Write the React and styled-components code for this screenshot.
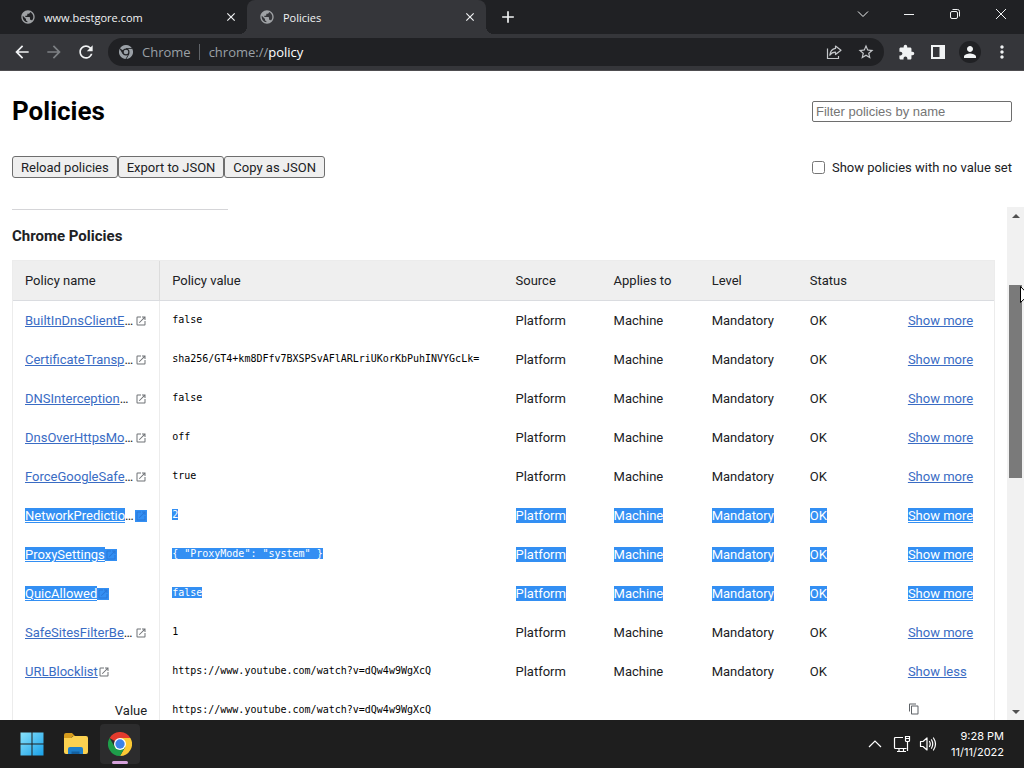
import React from 'react'
import styled, { createGlobalStyle, css } from 'styled-components';
import {
  MdArrowBack,
  MdArrowForward,
  MdRefresh,
  MdPublic,
  MdClose,
  MdAdd,
  MdStarBorder,
  MdExtension,
  MdPerson,
  MdMoreVert,
  MdOpenInNew,
  MdContentCopy,
} from 'react-icons/md';

const GlobalStyle = createGlobalStyle`
  * {
    box-sizing: border-box;
  }

  body {
    margin: 0;
    overflow: hidden;
    font-family: Roboto, "Liberation Sans", sans-serif;
    font-size: 13px;
    color: #202124;
    background: #fff;
  }

  button, input {
    font: inherit;
    color: inherit;
    margin: 0;
  }
`;

const Screen = styled.div`
  display: flex;
  flex-direction: column;
  height: 100vh;
`;

/* ---------- browser window ---------- */

const TabStrip = styled.header`
  display: flex;
  height: 34px;
  padding-left: 8px;
  background: #202124;
  color: #f1f3f4;
  font-family: "Open Sans", "Noto Sans", sans-serif;
  font-size: 11px;
`;

const Tab = styled.div`
  position: relative;
  display: flex;
  align-items: center;
  gap: 8px;
  width: 239px;
  padding: 0 8px 0 12px;
  color: #f1f3f4;

  ${({ $active }) => $active && css`
    background: #35363a;
    border-radius: 8px 8px 0 0;

    &::before,
    &::after {
      content: '';
      position: absolute;
      bottom: 0;
      width: 8px;
      height: 8px;
    }

    &::before {
      left: -8px;
      background: radial-gradient(circle at 0 0, transparent 8px, #35363a 8px);
    }

    &::after {
      right: -8px;
      background: radial-gradient(circle at 100% 0, transparent 8px, #35363a 8px);
    }
  `}

  > svg {
    color: #9fa2a5;
  }
`;

const TabTitle = styled.span`
  flex: 1;
  white-space: nowrap;
`;

const IconButton = styled.button`
  display: flex;
  align-items: center;
  justify-content: center;
  flex: none;
  width: ${({ $width }) => $width || 28}px;
  height: ${({ $height }) => $height || 28}px;
  padding: 0;
  border: 0;
  border-radius: 50%;
  background: none;
  color: ${({ $color }) => $color || '#f1f3f4'};
`;

const NewTab = styled.div`
  display: flex;
  align-items: center;
  flex: 1;
  padding-left: 8px;
`;

const Toolbar = styled.nav`
  display: flex;
  align-items: center;
  gap: 8px;
  height: 37px;
  padding: 0 8px;
  background: #35363a;
  border-bottom: 1px solid #4e4d50;
`;

const ButtonGroup = styled.div`
  display: flex;
  gap: 4px;
`;

const AddressBar = styled.div`
  display: flex;
  flex: 1;
  align-items: center;
  height: 28px;
  padding: 0 4px 0 11px;
  border-radius: 14px;
  background: #202124;
  color: #9aa0a6;
  font-family: "Open Sans", "Noto Sans", sans-serif;
  font-size: 13px;
`;

const SiteLabel = styled.span`
  margin-left: 9px;
  padding-right: 8px;
  border-right: 1px solid #5f6368;
  line-height: 16px;
`;

const Address = styled.span`
  flex: 1;
  padding-left: 9px;

  b {
    color: #fff;
    font-weight: 400;
  }
`;

/* ---------- policy page ---------- */

const Page = styled.main`
  display: flex;
  flex: 1;
  flex-direction: column;
  min-height: 0;
`;

const PageHead = styled.div`
  display: flex;
  align-items: center;
  justify-content: space-between;
  padding: 25px 12px 0;
`;

const PageTitle = styled.h1`
  margin: 0;
  color: #000;
  font-size: 26px;
  font-weight: 700;
  line-height: 30px;
`;

const FilterInput = styled.input`
  width: 200px;
  height: 21px;
  padding: 1px 3px;
  border: 1px solid #6e6e6e;
  border-radius: 2px;
  font-family: "Liberation Sans", Arial, sans-serif;

  &::placeholder {
    color: #757575;
  }
`;

const Actions = styled.div`
  display: flex;
  align-items: center;
  justify-content: space-between;
  padding: 30px 12px 29px;
`;

const ActionButtons = styled.div`
  display: flex;
`;

const ActionButton = styled.button`
  height: 22px;
  padding: 0 8px;
  border: 1px solid #6e6e6e;
  border-radius: 3px;
  background: #efefef;
`;

const CheckLabel = styled.label`
  display: flex;
  align-items: center;
  gap: 7px;

  input {
    width: 13px;
    height: 13px;
  }
`;

const ScrollArea = styled.div`
  display: flex;
  flex: 1;
  min-height: 0;
`;

const Content = styled.section`
  flex: 1;
  min-width: 0;
  padding: 2px 12px 0;
  overflow: hidden;
`;

const Rule = styled.hr`
  width: 216px;
  height: 1px;
  margin: 0;
  border: 0;
  background: #d5d5d8;
`;

const GroupTitle = styled.h2`
  margin: 16px 0 14px;
  font-size: 15px;
  font-weight: 700;
  line-height: 20px;
`;

const PolicyTable = styled.table`
  width: 100%;
  table-layout: fixed;
  border: 1px solid #ececec;
  border-spacing: 0;
`;

const HeadCell = styled.th`
  width: ${({ $width }) => $width};
  height: 40px;
  padding: 0 12px;
  border-bottom: 1px solid #dadce0;
  background: #efefef;
  font-weight: 400;
  text-align: left;

  &:first-child {
    border-right: 1px solid #dcdcdc;
  }
`;

const Cell = styled.td`
  height: 39px;
  padding: 0 12px;
  white-space: nowrap;

  &:first-child {
    border-right: 1px solid #ececec;
  }
`;

const DetailLabel = styled.th`
  height: 39px;
  padding: 0 12px;
  border-right: 1px solid #ececec;
  font-weight: 400;
  text-align: right;
`;

const highlight = css`
  background: #338ff3;
  color: #fff;
`;

const Mark = styled.span`
  ${({ $on }) => $on && highlight}
`;

const Link = styled.a`
  color: #3a6cc4;
  text-decoration: underline;
  ${({ $on }) => $on && highlight}
`;

const Name = styled.div`
  display: flex;
  align-items: center;
`;

const NameText = styled.span`
  flex: ${({ $cut }) => ($cut ? 1 : 'none')};
`;

const OpenIcon = styled.span`
  display: flex;
  flex: none;
  color: ${({ $on }) => ($on ? '#2a78d8' : '#6f7276')};
  background: ${({ $on }) => ($on ? '#338ff3' : 'none')};
`;

const Value = styled.code`
  display: block;
  padding-bottom: 2px;
  color: #000;
  font-family: "DejaVu Sans Mono", monospace;
  font-size: 10px;
  line-height: 13px;
`;

const CopyButton = styled.button`
  display: flex;
  padding: 0 0 3px;
  border: 0;
  background: none;
  color: #5f6368;
`;

const ScrollTrack = styled.div`
  position: relative;
  display: flex;
  flex-direction: column;
  align-items: center;
  width: 17px;
  background: #f1f1f1;
`;

const ScrollArrow = styled.button`
  display: flex;
  align-items: center;
  justify-content: center;
  width: 17px;
  height: 17px;
  padding: 0;
  border: 0;
  background: none;
`;

const ScrollGap = styled.div`
  flex: ${({ $part }) => $part};
`;

const ScrollThumb = styled.div`
  flex: 193;
  width: 13px;
  background: #7a7a7a;
`;

const Pointer = styled.svg`
  position: absolute;
  top: 79px;
  left: 13px;
`;

/* ---------- taskbar ---------- */

const Taskbar = styled.footer`
  display: flex;
  align-items: center;
  justify-content: space-between;
  height: 48px;
  padding: 0 20px 0 12px;
  background: #1e1e1e;
  color: #fff;
`;

const TaskButton = styled.button`
  position: relative;
  display: flex;
  align-items: center;
  justify-content: center;
  width: 40px;
  height: 40px;
  padding: 0;
  border: 0;
  border-radius: 4px;
  background: ${({ $open }) => ($open ? '#2c2c2d' : 'none')};

  ${({ $open }) => $open && css`
    &::after {
      content: '';
      position: absolute;
      bottom: 0;
      left: 12px;
      width: 16px;
      height: 3px;
      border-radius: 2px;
      background: #d6a3dc;
    }
  `}
`;

const Tray = styled.div`
  display: flex;
  align-items: center;
  gap: 8px;
`;

const Clock = styled.time`
  padding-left: 6px;
  font-family: Inter, sans-serif;
  font-size: 11px;
  line-height: 16px;
  text-align: right;

  span {
    display: block;
  }
`;

const columns = [
  ['Policy name', '15%'],
  ['Policy value', '35%'],
  ['Source', '10%'],
  ['Applies to', '10%'],
  ['Level', '10%'],
  ['Status', '10%'],
  ['', '10%'],
];

const policies = [
  { name: 'BuiltInDnsClientE', cut: true, value: 'false' },
  { name: 'CertificateTransp', cut: true, value: 'sha256/GT4+km8DFfv7BXSPSvAFlARLriUKorKbPuhINVYGcLk=' },
  { name: 'DNSInterception', cut: true, value: 'false' },
  { name: 'DnsOverHttpsMo', cut: true, value: 'off' },
  { name: 'ForceGoogleSafe', cut: true, value: 'true' },
  { name: 'NetworkPredictio', cut: true, value: '2', selected: true },
  { name: 'ProxySettings', value: '{ "ProxyMode": "system" }', selected: true },
  { name: 'QuicAllowed', value: 'false', selected: true },
  { name: 'SafeSitesFilterBe', cut: true, value: '1' },
  { name: 'URLBlocklist', value: 'https://www.youtube.com/watch?v=dQw4w9WgXcQ', expanded: true },
];

function ChromeMark({ size, mono }) {
  const colors = mono ? ['#9aa0a6', '#9aa0a6', '#9aa0a6'] : ['#e33b2e', '#fcc934', '#1e9e4a'];
  const line = mono ? '#202124' : 'none';
  return (
    <svg width={size} height={size} viewBox="0 0 24 24" aria-hidden="true">
      <path d="M12 12 L1.6 6 A12 12 0 0 1 22.4 6 Z" fill={colors[0]} />
      <path d="M12 12 V6 H22.4 A12 12 0 0 1 12 24 L17.2 15 Z" fill={colors[1]} />
      <path d="M12 12 L17.2 15 L12 24 A12 12 0 0 1 1.6 6 L6.8 15 Z" fill={colors[2]} />
      <path d="M12 6 H22.4 M17.2 15 L12 24 M6.8 15 L1.6 6" stroke={line} strokeWidth="1.4" />
      <circle cx="12" cy="12" r="6" fill={mono ? '#202124' : '#fff'} />
      <circle cx="12" cy="12" r={mono ? 4 : 4.7} fill={mono ? '#9aa0a6' : '#3b82e8'} />
    </svg>
  );
}

function ShareIcon() {
  return (
    <svg width="16" height="16" viewBox="0 0 16 16" fill="none" stroke="#c4c7ca" strokeWidth="1.2">
      <path d="M1.5 4.5 V14.5 H12.5 V12" />
      <path d="M9.5 2 L15 6.2 L9.5 10.5 V8.2 C7 8.2 5.2 9 3.8 11.2 C4.2 7.4 6.2 4.9 9.5 4.4 Z" strokeLinejoin="round" />
    </svg>
  );
}

function Browser() {
  return (
    <>
      <TabStrip>
        <Tab>
          <MdPublic size={16} />
          <TabTitle>www.bestgore.com</TabTitle>
          <IconButton $width={16} $height={16} aria-label="Close tab"><MdClose size={14} /></IconButton>
        </Tab>
        <Tab $active>
          <MdPublic size={16} />
          <TabTitle>Policies</TabTitle>
          <IconButton $width={16} $height={16} aria-label="Close tab"><MdClose size={14} /></IconButton>
        </Tab>
        <NewTab>
          <IconButton aria-label="New tab"><MdAdd size={20} /></IconButton>
        </NewTab>
        <IconButton $width={46} aria-label="Search tabs">
          <svg width="12" height="12" viewBox="0 0 12 12" fill="none" stroke="currentColor"><path d="M1 3.5 L6 8.5 L11 3.5" /></svg>
        </IconButton>
        <IconButton $width={46} aria-label="Minimize">
          <svg width="10" height="10" viewBox="0 0 10 10" fill="none" stroke="currentColor"><path d="M0 5.5 H10" /></svg>
        </IconButton>
        <IconButton $width={46} aria-label="Restore">
          <svg width="12" height="12" viewBox="0 0 12 12" fill="none" stroke="currentColor">
            <rect x="1.5" y="3.5" width="7" height="7" rx="1.5" />
            <path d="M3.5 1.5 H8.5 A2 2 0 0 1 10.5 3.5 V8.5" />
          </svg>
        </IconButton>
        <IconButton $width={46} aria-label="Close">
          <svg width="10" height="10" viewBox="0 0 10 10" fill="none" stroke="currentColor"><path d="M0 0 L10 10 M10 0 L0 10" /></svg>
        </IconButton>
      </TabStrip>
      <Toolbar>
        <ButtonGroup>
          <IconButton aria-label="Back"><MdArrowBack size={20} /></IconButton>
          <IconButton $color="#7d8084" aria-label="Forward"><MdArrowForward size={20} /></IconButton>
          <IconButton aria-label="Reload"><MdRefresh size={20} /></IconButton>
        </ButtonGroup>
        <AddressBar>
          <ChromeMark size={14} mono />
          <SiteLabel>Chrome</SiteLabel>
          <Address>chrome://<b>policy</b></Address>
          <ButtonGroup>
            <IconButton aria-label="Share"><ShareIcon /></IconButton>
            <IconButton $color="#c4c7ca" aria-label="Bookmark"><MdStarBorder size={18} /></IconButton>
          </ButtonGroup>
        </AddressBar>
        <ButtonGroup>
          <IconButton aria-label="Extensions"><MdExtension size={17} /></IconButton>
          <IconButton aria-label="Side panel">
            <svg width="14" height="14" viewBox="0 0 14 14"><path d="M0 0 H14 V14 H0 Z M2 2 V12 H8.5 V2 Z" fill="currentColor" fillRule="evenodd" /></svg>
          </IconButton>
          <IconButton aria-label="Profile">
            <svg width="22" height="22" viewBox="0 0 22 22">
              <circle cx="11" cy="11" r="11" fill="#202124" />
              <MdPerson x="2" y="2" size={18} />
            </svg>
          </IconButton>
          <IconButton aria-label="Menu"><MdMoreVert size={20} /></IconButton>
        </ButtonGroup>
      </Toolbar>
    </>
  );
}

function PolicyRow({ policy }) {
  const on = policy.selected;
  return (
    <>
      <tr>
        <Cell>
          <Name>
            <NameText $cut={policy.cut}>
              <Link href="#policy" $on={on}>{policy.name}</Link>
              {policy.cut && '…'}
            </NameText>
            <OpenIcon $on={on}><MdOpenInNew size={12} /></OpenIcon>
          </Name>
        </Cell>
        <Cell><Value><Mark $on={on}>{policy.value}</Mark></Value></Cell>
        <Cell><Mark $on={on}>Platform</Mark></Cell>
        <Cell><Mark $on={on}>Machine</Mark></Cell>
        <Cell><Mark $on={on}>Mandatory</Mark></Cell>
        <Cell><Mark $on={on}>OK</Mark></Cell>
        <Cell><Link href="#more" $on={on}>{policy.expanded ? 'Show less' : 'Show more'}</Link></Cell>
      </tr>
      {policy.expanded && (
        <tr>
          <DetailLabel scope="row">Value</DetailLabel>
          <Cell colSpan={5}><Value>{policy.value}</Value></Cell>
          <Cell><CopyButton aria-label="Copy value"><MdContentCopy size={12} /></CopyButton></Cell>
        </tr>
      )}
    </>
  );
}

function PolicyPage() {
  return (
    <Page>
      <PageHead>
        <PageTitle>Policies</PageTitle>
        <FilterInput type="text" placeholder="Filter policies by name" aria-label="Filter policies by name" />
      </PageHead>
      <Actions>
        <ActionButtons>
          <ActionButton>Reload policies</ActionButton>
          <ActionButton>Export to JSON</ActionButton>
          <ActionButton>Copy as JSON</ActionButton>
        </ActionButtons>
        <CheckLabel>
          <input type="checkbox" />
          Show policies with no value set
        </CheckLabel>
      </Actions>
      <ScrollArea>
        <Content>
          <Rule />
          <GroupTitle>Chrome Policies</GroupTitle>
          <PolicyTable>
            <thead>
              <tr>
                {columns.map(([label, width]) => (
                  <HeadCell key={label} $width={width} scope="col">{label}</HeadCell>
                ))}
              </tr>
            </thead>
            <tbody>
              {policies.map((policy) => <PolicyRow key={policy.name} policy={policy} />)}
            </tbody>
          </PolicyTable>
        </Content>
        <ScrollTrack>
          <ScrollArrow aria-label="Scroll up">
            <svg width="8" height="4" viewBox="0 0 8 4"><path d="M0 4 L4 0 L8 4 Z" fill="#505050" /></svg>
          </ScrollArrow>
          <ScrollGap $part={61} />
          <ScrollThumb />
          <ScrollGap $part={225} />
          <ScrollArrow aria-label="Scroll down">
            <svg width="8" height="4" viewBox="0 0 8 4"><path d="M0 0 L4 4 L8 0 Z" fill="#505050" /></svg>
          </ScrollArrow>
          <Pointer width="12" height="19" viewBox="0 0 12 19">
            <path d="M0.5 0.5 V16.5 L4.2 13 L6.6 18.4 L9 17.4 L6.6 12 H11.5 Z" fill="#fff" stroke="#000" />
          </Pointer>
        </ScrollTrack>
      </ScrollArea>
    </Page>
  );
}

function SystemTaskbar() {
  return (
    <Taskbar>
      <ButtonGroup>
        <TaskButton aria-label="Start">
          <svg width="24" height="24" viewBox="0 0 24 24">
            <defs>
              <linearGradient id="win" x1="0" y1="0" x2="24" y2="24" gradientUnits="userSpaceOnUse">
                <stop offset="0" stopColor="#8be3fb" />
                <stop offset="1" stopColor="#169fe8" />
              </linearGradient>
            </defs>
            <path d="M0.5 0.5 H11.5 V11.5 H0.5 Z M12.5 0.5 H23.5 V11.5 H12.5 Z M0.5 12.5 H11.5 V23.5 H0.5 Z M12.5 12.5 H23.5 V23.5 H12.5 Z" fill="url(#win)" />
          </svg>
        </TaskButton>
        <TaskButton aria-label="File Explorer">
          <svg width="26" height="24" viewBox="0 0 26 24">
            <path d="M1 3 Q1 1 3 1 H9 L12 4 H10 L8 6 H1 Z" fill="#d59b1c" />
            <path d="M1 6 H8 L10.5 4 H23 Q25 4 25 6 V20 Q25 22 23 22 H3 Q1 22 1 20 Z" fill="#fbd150" />
            <path d="M5 22 V17 Q5 15 7 15 H18 Q20 15 20 17 V22 Z" fill="#1d7fcb" />
            <path d="M8.5 22 V19.5 H16.5 V22 Z" fill="#14609f" />
          </svg>
        </TaskButton>
        <TaskButton $open aria-label="Google Chrome"><ChromeMark size={24} /></TaskButton>
      </ButtonGroup>
      <Tray>
        <svg width="20" height="14" viewBox="0 0 20 14" fill="none" stroke="#fff" strokeWidth="1.2"><path d="M4 10 L10 4 L16 10" /></svg>
        <svg width="18" height="18" viewBox="0 0 18 18" fill="none" stroke="#fff" strokeWidth="1.2">
          <path d="M10 2.5 H2.5 Q1.5 2.5 1.5 3.5 V12.5 Q1.5 13.5 2.5 13.5 H13.5 M6 13.5 V16.5 M10.5 13.5 V16.5 M4 16.5 H13" />
          <path d="M12.5 1.5 H16.5 V5.5 Q16.5 6.5 15.5 6.5 H13.5 Q12.5 6.5 12.5 5.5 Z M12.5 3.5 H16.5 M14.5 6.5 V16" />
        </svg>
        <svg width="18" height="16" viewBox="0 0 18 16" fill="none" stroke="#fff" strokeWidth="1.2" strokeLinejoin="round">
          <path d="M1.5 5.5 H4 L8 2 V14 L4 10.5 H1.5 Z" />
          <path d="M10.5 5.5 Q12 8 10.5 10.5 M12.5 3.8 Q15 8 12.5 12.2 M14.5 2 Q18.5 8 14.5 14" strokeLinecap="round" />
        </svg>
        <Clock>
          <span>9:28 PM</span>
          <span>11/11/2022</span>
        </Clock>
      </Tray>
    </Taskbar>
  );
}

function App() {
  return (
    <Screen>
      <GlobalStyle />
      <Browser />
      <PolicyPage />
      <SystemTaskbar />
    </Screen>
  )
}

export default App
